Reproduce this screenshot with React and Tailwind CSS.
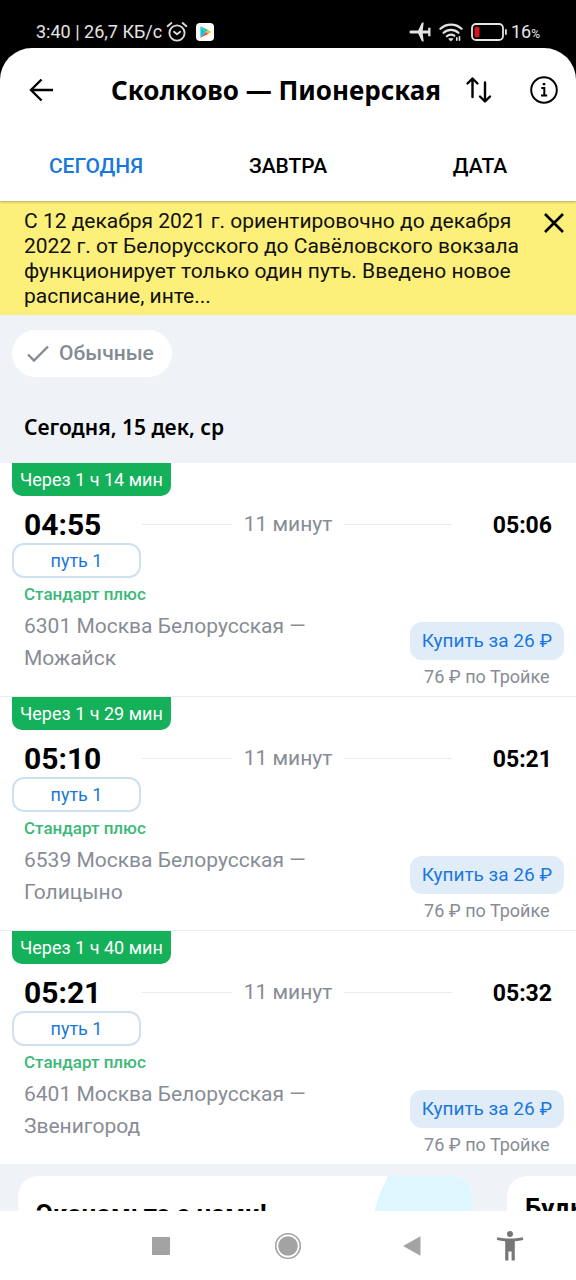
import React from "react";

const trips = [
  { id: 1, wait: "Через 1 ч 14 мин", from: "04:55", to: "05:06", route: "6301 Москва Белорусская — Можайск" },
  { id: 2, wait: "Через 1 ч 29 мин", from: "05:10", to: "05:21", route: "6539 Москва Белорусская — Голицыно" },
  { id: 3, wait: "Через 1 ч 40 мин", from: "05:21", to: "05:32", route: "6401 Москва Белорусская — Звенигород" },
];

function StatusBar() {
  return (
    <div className="flex h-12 shrink-0 items-center justify-between pt-4 pr-9 pl-9 text-lg text-[#e4e4e4]">
      <div className="flex items-center">
        <span>3:40 | 26,7 КБ/с</span>
        <svg className="ml-1 size-[22px]" viewBox="0 0 22 22" fill="none" stroke="#dcdcdc" strokeWidth="1.9" strokeLinecap="round" aria-hidden="true">
          <circle cx="11" cy="12" r="7.6" />
          <path d="M1.6 5.2 5.4 2M20.4 5.2 16.6 2" />
          <path d="m8 10.8 3 2.4 3.2-2.4" strokeLinejoin="round" />
        </svg>
        <svg className="ml-2 size-[18px]" viewBox="0 0 18 18" aria-hidden="true">
          <rect width="18" height="18" rx="4" fill="#fff" />
          <path d="M4.400 3.200v11.600L10 9z" fill="#18c1e6" />
          <path d="M4.400 3.200 10 9l2.200-2.100z" fill="#20c98b" />
          <path d="M12.200 6.900 10 9l2.200 2.100L15.400 9z" fill="#fbc02d" />
          <path d="M4.400 14.800 10 9l2.200 2.100z" fill="#e8503f" />
        </svg>
      </div>
      <div className="flex items-center">
        <svg className="h-5 w-[22px]" viewBox="0 0 22 20" fill="#e4e4e4" aria-hidden="true">
          <path d="M.4 10c0-.9.8-1.500 1.800-1.500h7L12.600 1.300c.2-.5.6-.8 1.100-.8h1l-1 8h5.500V5.800h2.300V14.200h-2.300V11.500h-5.500l1 8h-1c-.5 0-.9-.3-1.100-.8L9.200 11.500h-7C1.200 11.500.4 10.900.4 10z" />
        </svg>
        <svg className="ml-2 h-5 w-6" viewBox="0 0 24 20" fill="none" stroke="#e4e4e4" strokeWidth="2.200" strokeLinecap="round" aria-hidden="true">
          <path d="M1.400 6.800a15.500 15.500 0 0 1 21.200 0M4.600 10.800a10.800 10.800 0 0 1 14.800 0M7.900 14.300a6 6 0 0 1 7.400-.6" />
          <path d="M10.200 16.800h3.600L12 18.800z" fill="#e4e4e4" strokeWidth="1" strokeLinejoin="round" />
          <path d="M17.800 15.800v2.400M20.500 14.800v3.400" strokeWidth="1.600" />
        </svg>
        <svg className="ml-2 h-[18px] w-9" viewBox="0 0 36 18" aria-hidden="true">
          <rect x="1" y="1" width="31" height="16" rx="4" fill="none" stroke="#e4e4e4" strokeWidth="1.800" />
          <rect x="3.500" y="3.800" width="5" height="10.400" rx="1.500" fill="#d8141c" />
          <rect x="34" y="6" width="1.800" height="6" rx=".9" fill="#e4e4e4" />
        </svg>
        <span className="ml-1 flex items-baseline">
          16<span className="text-xs">%</span>
        </span>
      </div>
    </div>
  );
}

function Header() {
  return (
    <header className="relative z-10 shrink-0 rounded-t-[32px] bg-white shadow-[0_1px_3px_rgba(0,0,0,0.3)]">
      <div className="flex h-[84px] items-center pr-4 pl-7">
        <button type="button" aria-label="Назад" className="flex size-7 items-center justify-center">
          <svg className="size-7" viewBox="0 0 28 28" fill="none" stroke="#000" strokeWidth="2.400" aria-hidden="true">
            <path d="M25 14H3.500M13.500 3.500 3 14l10.500 10.500" />
          </svg>
        </button>
        <h1 className="flex-1 pl-9 text-center font-['Noto_Sans','Open_Sans',sans-serif] text-[26px] leading-8 font-bold whitespace-nowrap text-black">
          Сколково — Пионерская
        </h1>
        <button type="button" aria-label="Поменять направление" className="flex size-9 items-center justify-center">
          <svg className="size-7" viewBox="0 0 28 28" fill="none" stroke="#000" strokeWidth="2.400" strokeLinecap="round" strokeLinejoin="round" aria-hidden="true">
            <path d="M8.500 21V3M3.500 7.500 8.500 2.500l5 5M21 6.500V25M16 20.500l5 5 5-5" />
          </svg>
        </button>
        <button type="button" aria-label="Информация" className="ml-8 flex size-8 items-center justify-center">
          <svg className="size-7" viewBox="0 0 28 28" fill="none" stroke="#000" strokeWidth="2" aria-hidden="true">
            <circle cx="14" cy="14" r="12.800" />
            <path d="M11.300 12h3v7.400M11 19.400h6.200" />
            <path d="M12.700 7h2.600v2.200h-2.600z" fill="#000" stroke="none" />
          </svg>
        </button>
      </div>
      <div role="tablist" className="grid h-[69px] grid-cols-3 text-[21px] font-medium text-black">
        <button type="button" role="tab" aria-selected="true" className="text-[#1878dc]">СЕГОДНЯ</button>
        <button type="button" role="tab" aria-selected="false">ЗАВТРА</button>
        <button type="button" role="tab" aria-selected="false">ДАТА</button>
      </div>
    </header>
  );
}

function Notice() {
  return (
    <section className="flex items-start bg-[#fdf07a] pt-2 pb-1.5 pl-6">
      <p className="flex-1 text-[21px] leading-[25px] text-[#111]">
        С 12 декабря 2021 г. ориентировочно до декабря 2022 г. от Белорусского до Савёловского вокзала
        функционирует только один путь. Введено новое расписание, инте...
      </p>
      <button type="button" aria-label="Закрыть" className="flex h-7 w-11 shrink-0 items-center justify-center">
        <svg className="size-5" viewBox="0 0 20 20" fill="none" stroke="#000" strokeWidth="2.600" aria-hidden="true">
          <path d="m1 1 18 18M19 1 1 19" />
        </svg>
      </button>
    </section>
  );
}

function Trip({ trip }) {
  return (
    <li className="border-b border-[#e9ecef] bg-white last:border-b-0">
      <div className="flex px-3">
        <span className="flex h-[33px] items-center rounded-b-[10px] bg-[#15b05a] px-2 text-lg text-white">
          {trip.wait}
        </span>
      </div>
      <div className="mt-2.5 flex h-9 items-center px-6">
        <time className="w-[118px] text-[30px] font-bold text-black">{trip.from}</time>
        <span className="h-px flex-5 bg-[#e9ebee]" />
        <span className="px-3 pt-0.5 text-[21px] text-[#878c95]">11 минут</span>
        <span className="h-px flex-6 bg-[#e9ebee]" />
        <time className="w-[100px] pt-1 text-right text-[23px] font-bold text-black">{trip.to}</time>
      </div>
      <div className="px-3">
        <span className="mt-px flex h-[35px] w-[129px] items-center justify-center rounded-xl border-2 border-[#cfe0f0] text-lg text-[#1878dc]">
          путь 1
        </span>
      </div>
      <div className="flex justify-between pr-3 pl-6">
        <div className="w-[300px]">
          <p className="h-8 text-[17px] leading-8 font-medium text-[#3cb878]">Стандарт плюс</p>
          <p className="text-[21px] leading-8 text-[#878c95]">{trip.route}</p>
        </div>
        <div className="mt-11 mb-1.5 text-center">
          <button type="button" className="block h-[38px] rounded-xl bg-[#e1ecf9] px-3 text-[19px] text-[#1878dc]">
            Купить за 26 ₽
          </button>
          <p className="mt-1 text-lg leading-[26px] text-[#878c95]">76 ₽ по Тройке</p>
        </div>
      </div>
    </li>
  );
}

function Promos() {
  return (
    <section className="flex gap-[35px] pt-3 pl-[18px]">
      <article className="relative h-40 w-[454px] shrink-0 overflow-hidden rounded-[20px] bg-white px-[18px] pt-5">
        <svg className="absolute top-0 right-0 h-40 w-28" viewBox="0 0 112 160" aria-hidden="true">
          <path d="M28 0C22 12 17 24 14 38c-8 40-8 80-2 122h100V0z" fill="#def6fd" />
        </svg>
        <h3 className="text-[26px] leading-9 font-bold text-black">Экономьте с нами!</h3>
      </article>
      <article className="h-40 w-[454px] shrink-0 rounded-[20px] bg-white px-[18px] pt-3.5">
        <h3 className="text-[26px] leading-9 font-bold text-black">Будьте в курсе</h3>
      </article>
    </section>
  );
}

function SystemNav() {
  return (
    <nav className="grid h-[69px] shrink-0 grid-cols-[1fr_380px_1fr] bg-white">
      <div className="col-start-2 grid grid-cols-3">
        <button type="button" aria-label="Недавние" className="flex items-center justify-center">
          <svg className="size-[18px]" viewBox="0 0 18 18" aria-hidden="true">
            <rect width="18" height="18" fill="#a3a3a3" />
          </svg>
        </button>
        <button type="button" aria-label="Домой" className="flex items-center justify-center">
          <svg className="size-7" viewBox="0 0 28 28" aria-hidden="true">
            <circle cx="14" cy="14" r="12.300" fill="none" stroke="#a3a3a3" strokeWidth="1.600" />
            <circle cx="14" cy="14" r="9.800" fill="#a3a3a3" />
          </svg>
        </button>
        <button type="button" aria-label="Назад в системе" className="flex items-center justify-center">
          <svg className="h-5 w-6" viewBox="0 0 24 20" aria-hidden="true">
            <path d="M0 10 17.500.300v19.400z" fill="#a3a3a3" />
          </svg>
        </button>
      </div>
      <button type="button" aria-label="Специальные возможности" className="flex w-16 items-center justify-center">
        <svg className="h-[30px] w-7" viewBox="0 0 28 30" fill="#777" aria-hidden="true">
          <circle cx="14" cy="3" r="3" />
          <path d="M1.200 6.200C9 8 19 8 26.800 6.200l.4 2.800c-2.900.6-5.600 1-8.400 1.200V29.600h-3.200V20.500h-3.200v9.100H9.200V10.200C6.400 10 3.700 9.600.8 9z" />
        </svg>
      </button>
    </nav>
  );
}

export default function App() {
  return (
    <div className="flex h-screen flex-col overflow-hidden bg-black font-[Roboto,sans-serif]">
      <StatusBar />
      <Header />
      <main className="min-h-0 flex-1 overflow-hidden bg-[#eff2f7]">
        <Notice />
        <div className="flex px-3 pt-[15px]">
          <label className="flex h-[47px] cursor-pointer items-center rounded-full bg-white pr-[18px] pl-[15px] text-[21px] font-medium text-[#858b95]">
            <input type="checkbox" defaultChecked className="sr-only" />
            <svg className="mr-2.5 h-[18px] w-[22px]" viewBox="0 0 22 18" fill="none" stroke="#858b95" strokeWidth="2.400" aria-hidden="true">
              <path d="m1 9.500 6 6L21 1.500" />
            </svg>
            Обычные
          </label>
        </div>
        <h2 className="px-6 pt-[34px] pb-5 font-['Noto_Sans','Open_Sans',sans-serif] text-[21px] leading-8 font-semibold text-black">
          Сегодня, 15 дек, ср
        </h2>
        <ul>
          {trips.map((trip) => (
            <Trip key={trip.id} trip={trip} />
          ))}
        </ul>
        <Promos />
      </main>
      <SystemNav />
    </div>
  );
}
